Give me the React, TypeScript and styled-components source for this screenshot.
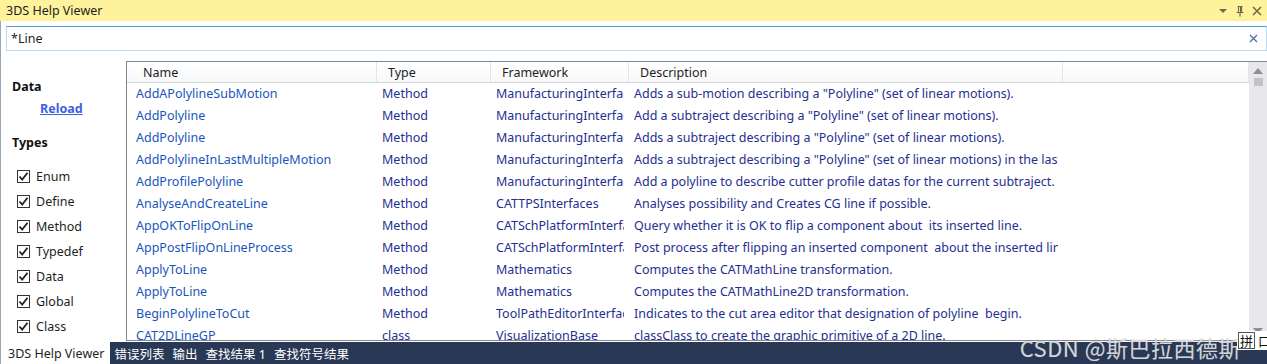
import React from "react";
import styled, { createGlobalStyle } from "styled-components";

const Global = createGlobalStyle`
  html, body { margin: 0; padding: 0; background: #fff; }
  body { font-family: "Noto Sans", "Noto Sans CJK SC", sans-serif; font-size: 12px; }
  * { box-sizing: border-box; }
`;

const Window = styled.div`
  width: 1267px;
  height: 364px;
  display: flex;
  flex-direction: column;
  position: relative;
  overflow: hidden;
  background: #fff;
`;

const TitleBar = styled.div`
  height: 21px;
  flex-shrink: 0;
  background: #fff29d;
  display: flex;
  align-items: center;
  padding: 0 4px 0 6px;
  color: #1e1e1e;
  font-size: 12.5px;
`;

const TitleText = styled.div`
  flex: 1;
`;

const TitleIcons = styled.div`
  display: flex;
  align-items: center;
  gap: 5px;
  color: #6b6a4d;
`;

const Body = styled.div`
  flex: 1;
  display: flex;
  flex-direction: column;
  border-left: 1px solid #9ba7b7;
  min-height: 0;
`;

const SearchRow = styled.div`
  padding: 5px 0 0 5px;
  flex-shrink: 0;
`;

const SearchBox = styled.div`
  height: 25px;
  border: 1px solid #c1d9ee;
  border-top-color: #5b9bd0;
  display: flex;
  align-items: center;
  padding: 0 8px 0 4px;
  font-size: 12.5px;
  color: #1e1e1e;
`;

const SearchValue = styled.div`
  flex: 1;
`;

const Main = styled.div`
  flex: 1;
  display: flex;
  min-height: 0;
  padding-top: 10px;
`;

const SidePanel = styled.div`
  width: 125px;
  padding: 11px 0 0 11px;
  display: flex;
  flex-direction: column;
`;

const SectionTitle = styled.div<{ $mt?: number }>`
  font-weight: bold;
  font-size: 12.5px;
  color: #111;
  margin-top: ${(p) => p.$mt ?? 0}px;
`;

const ReloadLink = styled.a`
  margin: 5px 0 0 28px;
  font-weight: bold;
  font-size: 12.5px;
  color: #3b5fe0;
  text-decoration: underline;
  cursor: pointer;
`;

const CheckList = styled.div`
  display: flex;
  flex-direction: column;
  gap: 7px;
  margin-top: 16px;
  padding-left: 5px;
`;

const CheckRow = styled.label`
  display: flex;
  align-items: center;
  gap: 6px;
  height: 18px;
  font-size: 12.5px;
  color: #1e1e1e;
`;

const Box = styled.span`
  width: 13px;
  height: 13px;
  border: 1px solid #333;
  background: #fff;
  display: flex;
  align-items: center;
  justify-content: center;
`;

const TableFrame = styled.div`
  flex: 1;
  display: flex;
  border: 1px solid #828790;
  border-right: none;
  min-width: 0;
  margin-bottom: 1px;
`;

const TableArea = styled.div`
  flex: 1;
  display: flex;
  flex-direction: column;
  min-width: 0;
  overflow: hidden;
`;

const columns = "250px 114px 138px 434px 186px";

const HeaderRow = styled.div`
  height: 21px;
  flex-shrink: 0;
  display: grid;
  grid-template-columns: ${columns};
  background: linear-gradient(#ffffff, #f7f8fa);
  border-bottom: 1px solid #d5d5d5;
`;

const HeaderCell = styled.div<{ $pad: number }>`
  padding-left: ${(p) => p.$pad}px;
  padding-top: 1px;
  display: flex;
  align-items: center;
  border-right: 1px solid #e3e5e8;
  font-size: 12.5px;
  color: #1e1e1e;
`;

const DataRow = styled.div`
  height: 22px;
  display: grid;
  grid-template-columns: ${columns};
  flex-shrink: 0;
`;

const DataCell = styled.div<{ $pad: number; $name?: boolean }>`
  padding-left: ${(p) => p.$pad}px;
  padding-right: 5px;
  padding-bottom: 2px;
  display: flex;
  align-items: center;
  white-space: nowrap;
  overflow: hidden;
  font-size: 12.5px;
  color: ${(p) => (p.$name ? "#1a55bc" : "#262f8f")};
`;

const Clip = styled.span`
  overflow: hidden;
  display: block;
  width: 100%;
`;

const ScrollBar = styled.div`
  width: 18px;
  background: #e8e8ec;
  display: flex;
  flex-direction: column;
  align-items: center;
  padding-top: 6px;
  position: relative;
`;

const Thumb = styled.div`
  width: 9px;
  height: 8px;
  background: #c2c3c9;
  margin-top: 4px;
`;

const DownArrow = styled.div`
  position: absolute;
  bottom: 2px;
  left: 4px;
`;

const TabBar = styled.div`
  height: 22px;
  flex-shrink: 0;
  background: #293955;
  display: flex;
  align-items: stretch;
  margin-left: 1px;
`;

const Tab = styled.div<{ $active?: boolean }>`
  padding: 0 ${(p) => (p.$active ? 6 : 3)}px;
  margin-right: ${(p) => (p.$active ? 1 : 2)}px;
  display: flex;
  align-items: center;
  font-size: 12.5px;
  background: ${(p) => (p.$active ? "#ffffff" : "transparent")};
  color: ${(p) => (p.$active ? "#1e1e1e" : "#ffffff")};
`;

const Watermark = styled.div`
  position: absolute;
  right: 26px;
  bottom: 1px;
  font-family: "Noto Sans CJK SC", "Noto Sans", sans-serif;
  font-size: 22px;
  color: rgba(236, 236, 240, 0.85);
  text-shadow: 0 0 1px rgba(110, 110, 120, 0.7);
  pointer-events: none;
  letter-spacing: 0.5px;
`;

const ImeBox = styled.div`
  position: absolute;
  right: 0;
  bottom: 14px;
  width: 30px;
  height: 19px;
  background: #fff;
  display: flex;
  align-items: center;
  font-family: "Noto Sans CJK SC", sans-serif;
  font-size: 13px;
  color: #111;
  gap: 3px;
  padding-left: 1px;
`;

const ImeChar = styled.span`
  border: 1px solid #555;
  line-height: 15px;
  padding: 0 1px;
`;

type Row = [string, string, string, string];

const rows: Row[] = [
  ["AddAPolylineSubMotion", "Method", "ManufacturingInterfaces", 'Adds a sub-motion describing a "Polyline" (set of linear motions).'],
  ["AddPolyline", "Method", "ManufacturingInterfaces", 'Add a subtraject describing a "Polyline" (set of linear motions).'],
  ["AddPolyline", "Method", "ManufacturingInterfaces", 'Adds a subtraject describing a "Polyline" (set of linear motions).'],
  ["AddPolylineInLastMultipleMotion", "Method", "ManufacturingInterfaces", 'Adds a subtraject describing a "Polyline" (set of linear motions) in the last multiple motion.'],
  ["AddProfilePolyline", "Method", "ManufacturingInterfaces", "Add a polyline to describe cutter profile datas for the current subtraject."],
  ["AnalyseAndCreateLine", "Method", "CATTPSInterfaces", "Analyses possibility and Creates CG line if possible."],
  ["AppOKToFlipOnLine", "Method", "CATSchPlatformInterfaces", "Query whether it is OK to flip a component about\u00a0 its inserted line."],
  ["AppPostFlipOnLineProcess", "Method", "CATSchPlatformInterfaces", "Post process after flipping an inserted component\u00a0 about the inserted line."],
  ["ApplyToLine", "Method", "Mathematics", "Computes the CATMathLine transformation."],
  ["ApplyToLine", "Method", "Mathematics", "Computes the CATMathLine2D transformation."],
  ["BeginPolylineToCut", "Method", "ToolPathEditorInterfaces", "Indicates to the cut area editor that designation of polyline\u00a0 begin."],
  ["CAT2DLineGP", "class", "VisualizationBase", "classClass to create the graphic primitive of a 2D line."],
];

const types = ["Enum", "Define", "Method", "Typedef", "Data", "Global", "Class"];

const Check = () => (
  <svg width="11" height="11" viewBox="0 0 11 11">
    <path d="M1.5 5.5 L4.2 8.5 L9.5 1.8" fill="none" stroke="#222" strokeWidth="1.8" />
  </svg>
);

export default function App() {
  return (
    <Window>
      <Global />
      <TitleBar>
        <TitleText>3DS Help Viewer</TitleText>
        <TitleIcons>
          <svg width="12" height="12" viewBox="0 0 12 12">
            <path d="M2 4 H10 L6 8 Z" fill="#6b6a4d" />
          </svg>
          <svg width="12" height="12" viewBox="0 0 12 12">
            <path d="M3.5 1.5 H8.5 M4.5 1.5 V7 M7.5 1.5 V7 M2.5 7.5 H9.5 M6 7.5 V11.5" fill="none" stroke="#6b6a4d" strokeWidth="1.2" />
            <path d="M6.5 2 V7" stroke="#6b6a4d" strokeWidth="1" />
          </svg>
          <svg width="12" height="12" viewBox="0 0 12 12">
            <path d="M2 2 L10 10 M10 2 L2 10" stroke="#6b6a4d" strokeWidth="1.6" />
          </svg>
        </TitleIcons>
      </TitleBar>
      <Body>
        <SearchRow>
          <SearchBox>
            <SearchValue>*Line</SearchValue>
            <svg width="9" height="9" viewBox="0 0 9 9">
              <path d="M1 1 L8 8 M8 1 L1 8" stroke="#4c6f9c" strokeWidth="1.3" />
            </svg>
          </SearchBox>
        </SearchRow>
        <Main>
          <SidePanel>
            <SectionTitle $mt={6}>Data</SectionTitle>
            <ReloadLink>Reload</ReloadLink>
            <SectionTitle $mt={17}>Types</SectionTitle>
            <CheckList>
              {types.map((t) => (
                <CheckRow key={t}>
                  <Box>
                    <Check />
                  </Box>
                  {t}
                </CheckRow>
              ))}
            </CheckList>
          </SidePanel>
          <TableFrame>
            <TableArea>
              <HeaderRow>
                <HeaderCell $pad={16}>Name</HeaderCell>
                <HeaderCell $pad={11}>Type</HeaderCell>
                <HeaderCell $pad={11}>Framework</HeaderCell>
                <HeaderCell $pad={11}>Description</HeaderCell>
                <HeaderCell $pad={11} />
              </HeaderRow>
              {rows.map((r, i) => (
                <DataRow key={i}>
                  <DataCell $pad={9} $name>
                    {r[0]}
                  </DataCell>
                  <DataCell $pad={5}>{r[1]}</DataCell>
                  <DataCell $pad={5}>
                    <Clip>{r[2]}</Clip>
                  </DataCell>
                  <DataCell $pad={5}>
                    <Clip>{r[3]}</Clip>
                  </DataCell>
                  <DataCell $pad={5} />
                </DataRow>
              ))}
            </TableArea>
            <ScrollBar>
              <svg width="10" height="6" viewBox="0 0 10 6">
                <path d="M0 6 L5 0 L10 6 Z" fill="#8e8f96" />
              </svg>
              <Thumb />
              <DownArrow>
                <svg width="10" height="6" viewBox="0 0 10 6">
                  <path d="M0 0 L10 0 L5 6 Z" fill="#8e8f96" />
                </svg>
              </DownArrow>
            </ScrollBar>
          </TableFrame>
        </Main>
        <TabBar>
          <Tab $active>3DS Help Viewer</Tab>
          <Tab>错误列表</Tab>
          <Tab>输出</Tab>
          <Tab>查找结果 1</Tab>
          <Tab>查找符号结果</Tab>
        </TabBar>
      </Body>
      <Watermark>CSDN @斯巴拉西德斯</Watermark>
      <ImeBox>
        <ImeChar>拼</ImeChar>
        <span>口</span>
      </ImeBox>
    </Window>
  );
}
